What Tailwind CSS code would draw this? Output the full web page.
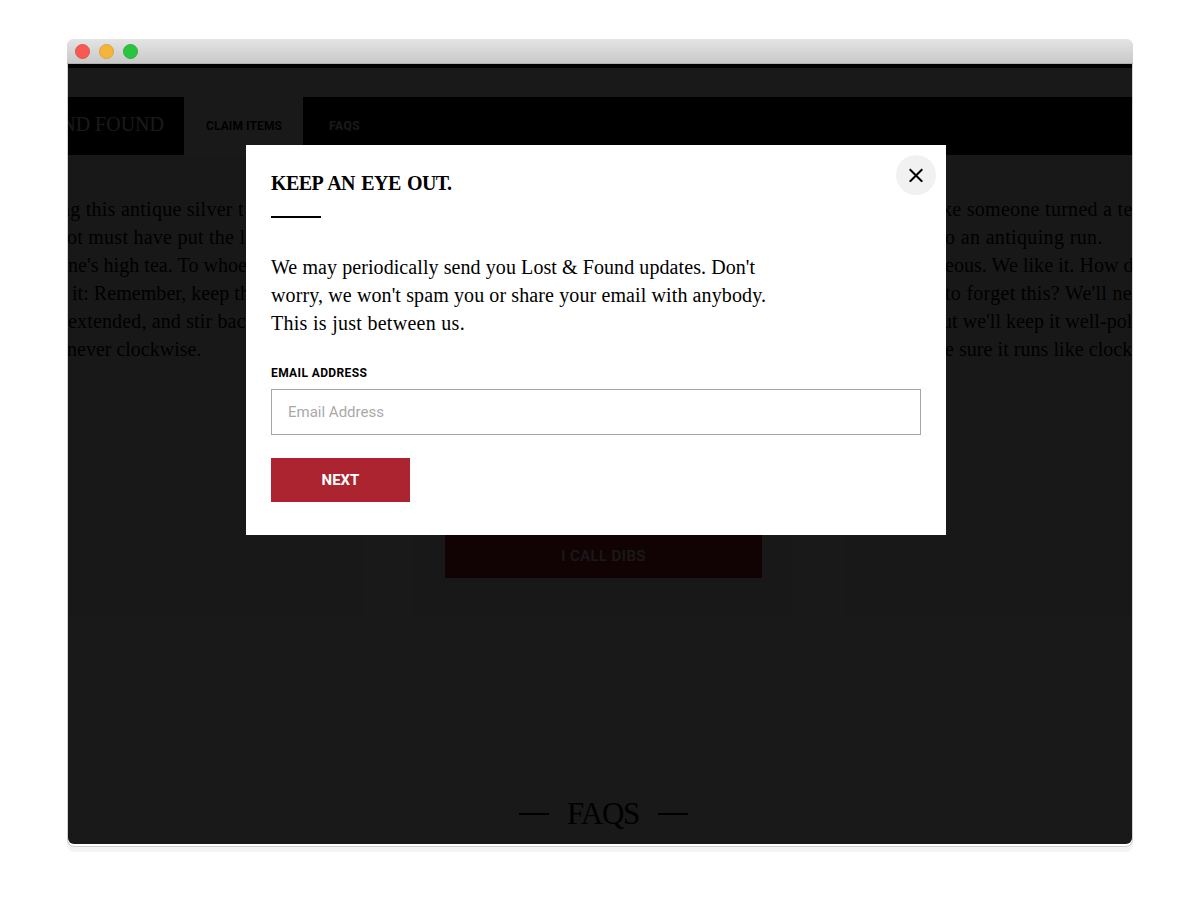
<!DOCTYPE html>
<html lang="en">
<head>
    <meta charset="UTF-8">
    <meta name="viewport" content="width=device-width, initial-scale=1.0">
    <script src="https://cdn.jsdelivr.net/npm/@tailwindcss/browser@4"></script>
    <title>Lost and Found</title>
</head>
<body class="bg-white h-[905px] overflow-hidden pt-[39px] pl-[67px] font-['Roboto',sans-serif] text-black">

    <!-- Browser window -->
    <div class="w-[1066px] h-[813px] rounded-[7px] bg-[#f4f4f4]">
    <div class="h-[808px] rounded-[7px] border border-t-0 border-[#d0d0d0] bg-white">

        <!-- Title bar -->
        <div class="-mx-px h-[25px] rounded-t-[7px] bg-linear-to-b from-[#e4e4e4] to-[#c9c9c9] border-b border-[#b0b0b0] flex items-center gap-[8.7px] pl-[8.4px]">
            <span class="size-[15px] rounded-full bg-[#f65a52] border border-[#e2534d]"></span>
            <span class="size-[15px] rounded-full bg-[#f6b53a] border border-[#dfa338]"></span>
            <span class="size-[15px] rounded-full bg-[#2bc440] border border-[#2bb23c]"></span>
        </div>

        <!-- Page -->
        <div class="relative h-[780px] overflow-hidden rounded-b-[6px] bg-white border-t-4 border-black">

            <!-- Nav -->
            <nav class="mt-[29px] h-[58px] flex bg-black text-[12px] font-bold text-white">
                <div class="w-[116px] flex justify-end pr-5 whitespace-nowrap font-['Liberation_Serif',serif] font-normal text-[20px] leading-[54px]">LOST AND FOUND</div>
                <a class="w-[119px] bg-white text-black pl-[22px] leading-[58px] tracking-[0.1px]">CLAIM ITEMS</a>
                <a class="pl-[26px] leading-[58px] tracking-[0.5px]">FAQS</a>
            </nav>

            <!-- Items -->
            <section class="mt-px h-[461px] flex font-['Liberation_Serif',serif] text-[20px] leading-7 whitespace-nowrap">
                <div class="w-[297px] bg-[#f4f4f4] pt-[39px] overflow-hidden">
                    <p class="-ml-[8px] tracking-[0.25px]">ng this antique silver t</p>
                    <p class="-ml-px tracking-[0.25px]">ot must have put the l</p>
                    <p class="tracking-[0.05px]">ne's high tea. To whoe</p>
                    <p class="ml-1 tracking-[0.05px]">it: Remember, keep th</p>
                    <p class="tracking-[0.15px]">extended, and stir bac</p>
                    <p class="-ml-px">never clockwise.</p>
                </div>
                <div class="ml-[47px] w-[380px] bg-[#f4f4f4] px-[33px] flex flex-col justify-end pb-[39px]">
                    <button class="w-[317px] h-11 bg-[#ac2430] text-white font-['Roboto',sans-serif] font-medium text-[15px] tracking-[0.4px]">I CALL DIBS</button>
                </div>
                <div class="ml-auto w-[288px] bg-[#f4f4f4] pt-[39px] pl-[101px] overflow-hidden">
                    <p class="-ml-[3px] tracking-[0.28px]">ke someone turned a te</p>
                    <p class="tracking-[0.35px]">o an antiquing run.</p>
                    <p class="tracking-[0.05px]">eous. We like it. How d</p>
                    <p class="tracking-[0.28px]">to forget this? We'll ne</p>
                    <p class="-ml-[3px] tracking-[0.05px]">ut we'll keep it well-pol</p>
                    <p class="tracking-[0.05px]">e sure it runs like clock</p>
                </div>
            </section>

            <!-- FAQs -->
            <section class="mt-[140px] h-[90px] bg-[#f9f9f9] flex justify-center items-start pt-[39px] pl-[7px]">
                <h2 class="flex items-center gap-[18px] font-['Liberation_Serif',serif] text-[31px] leading-9">
                    <span class="w-[30px] h-0.5 bg-black"></span>
                    <span class="w-[73px] tracking-[-1.2px]">FAQS</span>
                    <span class="w-[30px] h-0.5 bg-black"></span>
                </h2>
            </section>

            <!-- Overlay -->
            <div class="absolute inset-0 bg-black/90 pt-[77px] pl-[178px]">

                <!-- Modal -->
                <div class="relative w-[700px] h-[390px] bg-white px-[25px] pt-6">
                    <h1 class="font-['Liberation_Serif',serif] text-[20px] leading-7 font-bold tracking-[-0.6px] [word-spacing:2px]">KEEP AN EYE OUT.</h1>
                    <div class="mt-[19px] w-[50px] h-0.5 bg-black"></div>
                    <div class="mt-[35px] font-['Liberation_Serif',serif] text-[20px] leading-7 whitespace-nowrap">
                        <p class="tracking-[0.08px]">We may periodically send you Lost &amp; Found updates. Don't</p>
                        <p class="tracking-[0.11px]">worry, we won't spam you or share your email with anybody.</p>
                        <p class="tracking-[0.28px]">This is just between us.</p>
                    </div>
                    <label for="email" class="block mt-[26px] text-[12px] leading-5 font-bold tracking-[0.38px]">EMAIL ADDRESS</label>
                    <input id="email" type="email" placeholder="Email Address" class="block mt-[6px] w-[650px] h-[46px] border border-[#a5a5a5] px-4 text-[15px] placeholder:text-[#a9a9a9]">
                    <button class="block mt-[23px] w-[139px] h-11 bg-[#ac2430] text-white text-[15px] font-bold">NEXT</button>

                    <button class="absolute top-[10px] right-[10px] size-10 rounded-full bg-[#f1f1f1] flex items-center justify-center">
                        <svg class="size-[14px]" viewBox="0 0 14 14" fill="none" stroke="black" stroke-width="2"><path d="M.7 1.2l12.6 12.6M13.3 1.2L.7 13.8"/></svg>
                    </button>
                </div>
            </div>
        </div>
    </div>
    </div>

</body>
</html>
